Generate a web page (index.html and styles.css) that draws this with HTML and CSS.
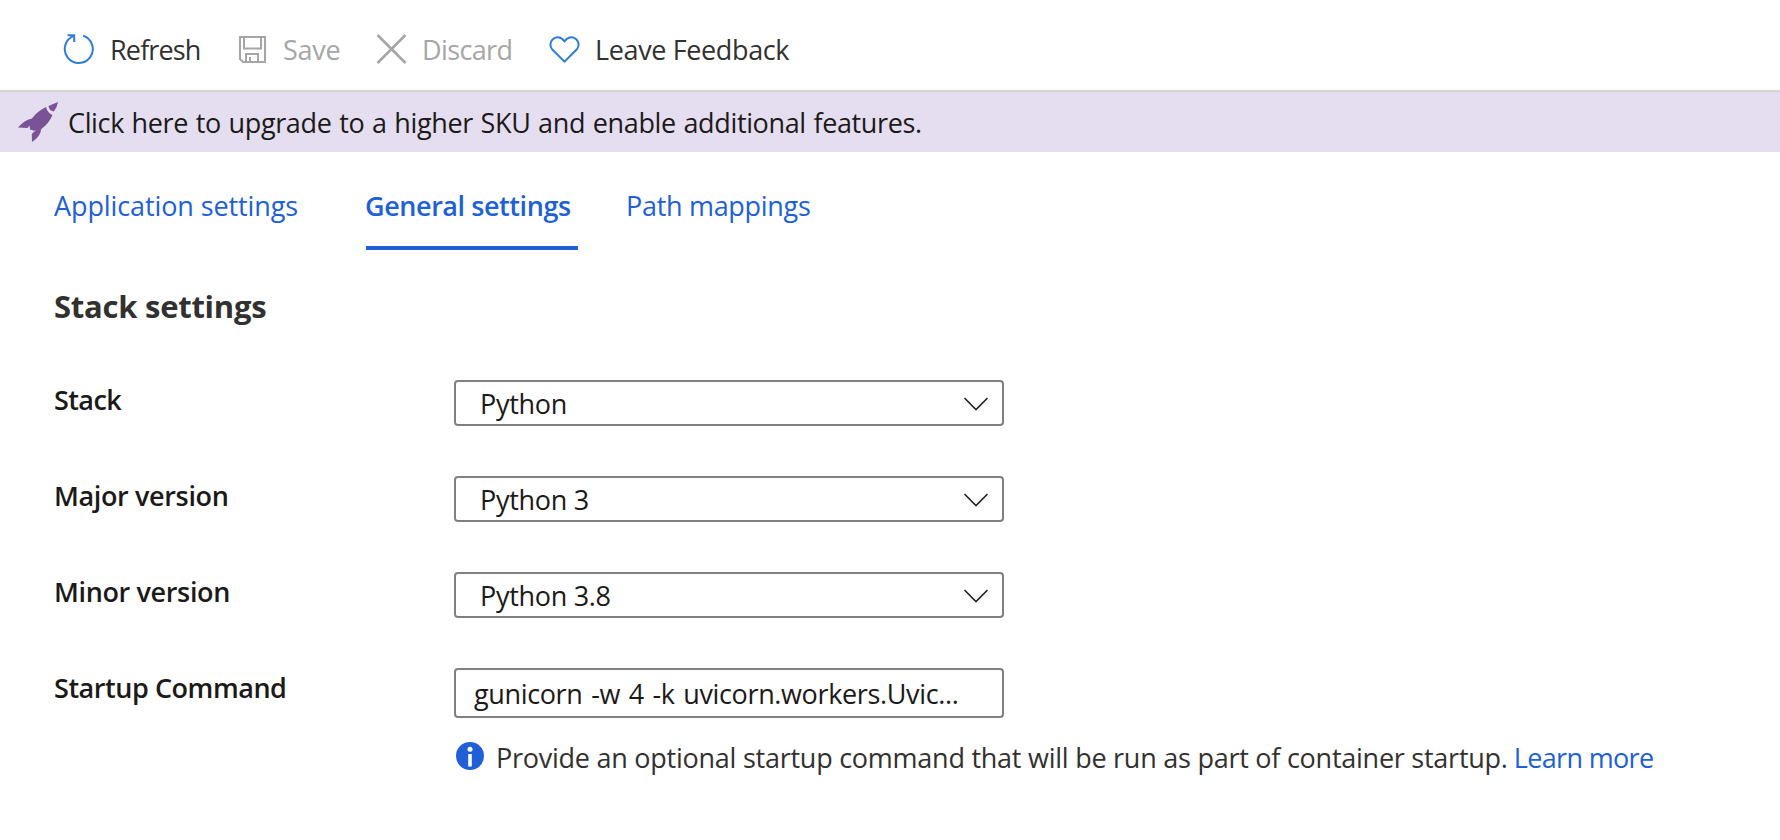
FILE: index.html
```html
<!DOCTYPE html>
<html lang="en">
<head>
<meta charset="utf-8">
<title>General settings</title>
<link rel="stylesheet" href="styles.css">
</head>
<body>
<header class="toolbar">
  <button class="command refresh">
    <svg class="icon" width="32" height="32" viewBox="0 0 32 32" fill="none" stroke="#2f7ddb" stroke-width="2"><path d="M20.2 2.7A14 14 0 1 1 10.8 2.9M4.500 2.200H11.200V9"/></svg>
    <span class="text">Refresh</span>
  </button>
  <button class="command save disabled">
    <svg class="icon" width="32" height="32" viewBox="0 0 32 32" fill="none" stroke="#a6a6a6" stroke-width="2"><path d="M2 4H27V29H5L2 26ZM6 4V15.500H23V4M8 29V21H20V29M12 24V29"/></svg>
    <span class="text">Save</span>
  </button>
  <button class="command discard disabled">
    <svg class="icon" width="32" height="32" viewBox="0 0 32 32" fill="none" stroke="#a6a6a6" stroke-width="2.600"><path d="M1.500 2L29.500 30M29.500 2L1.500 30"/></svg>
    <span class="text">Discard</span>
  </button>
  <button class="command feedback">
    <svg class="icon" width="32" height="32" viewBox="0 0 32 32" fill="none" stroke="#2f7ddb" stroke-width="2"><path d="M15.500 8.300L13.300 6.100A7.200 7.200 0 0 0 3.100 16.200L15.500 28.600L27.900 16.200A7.200 7.200 0 0 0 17.700 6.100Z"/></svg>
    <span class="text">Leave Feedback</span>
  </button>
</header>

<a class="banner">
  <svg class="rocket" width="42" height="42" viewBox="0 0 42 42" fill="#7a5296"><path d="M41 1L31.500 5Q32 9.500 36.800 10.500Q40.300 6 41 1Z"/><path d="M29 6Q20.500 10 15 17.500Q8 18.500 1 26.600L10.500 27L12.500 24.500L13 28.500L17 29.700L19 29L14.800 33L15 41Q23.200 36 24.300 28Q32 22.500 35.500 14Q30.500 12 29 6Z"/></svg>
  <span class="text">Click here to upgrade to a higher SKU and enable additional features.</span>
</a>

<nav class="tabs">
  <a class="tab application">Application settings</a>
  <a class="tab general active">General settings</a>
  <a class="tab paths">Path mappings</a>
</nav>

<main class="settings">
  <h2 class="heading">Stack settings</h2>
  <div class="row">
    <label class="label stack">Stack</label>
    <div class="field select"><span class="value">Python</span>
      <svg class="chevron" width="26" height="16" viewBox="0 0 26 16" fill="none" stroke="#222" stroke-width="1.600"><path d="M1.500 2L13 13.500L24.500 2"/></svg></div>
  </div>
  <div class="row">
    <label class="label major">Major version</label>
    <div class="field select"><span class="value">Python 3</span>
      <svg class="chevron" width="26" height="16" viewBox="0 0 26 16" fill="none" stroke="#222" stroke-width="1.600"><path d="M1.500 2L13 13.500L24.500 2"/></svg></div>
  </div>
  <div class="row">
    <label class="label minor">Minor version</label>
    <div class="field select"><span class="value">Python 3.8</span>
      <svg class="chevron" width="26" height="16" viewBox="0 0 26 16" fill="none" stroke="#222" stroke-width="1.600"><path d="M1.500 2L13 13.500L24.500 2"/></svg></div>
  </div>
  <div class="row">
    <label class="label startup">Startup Command</label>
    <div class="field input"><span class="command-line">gunicorn -w 4 -k uvicorn.workers.Uvic...</span></div>
  </div>
  <div class="help">
    <svg class="info" width="28" height="28" viewBox="0 0 28 28"><circle cx="14" cy="14" r="14" fill="#215fd6"/><circle cx="14" cy="7.300" r="2.500" fill="#fff"/><path d="M12.200 12H15.800V24.500H12.200Z" fill="#fff"/></svg>
    <span class="help-text">Provide an optional startup command that will be run as part of container startup.</span>
    <a class="learn">Learn more</a>
  </div>
</main>
</body>
</html>
```
FILE: styles.css
```css
* { box-sizing: border-box; }

body {
  margin: 0;
  background: #fff;
  color: #1b1a19;
  font: 27px/40px "Open Sans", "Noto Sans", sans-serif;
  letter-spacing: -0.25px;
  white-space: nowrap;
}

svg { display: block; flex: none; }

.toolbar {
  display: flex;
  height: 92px;
  padding: 9px 0 0 63px;
  border-bottom: 2px solid #d4d4d4;
}

.command {
  display: flex;
  align-items: center;
  gap: 15px;
  height: 81px;
  padding: 0;
  border: 0;
  background: none;
  color: #323130;
  font: inherit;
}

.command .icon { margin-top: -1px; }
.command .text { padding-top: 1px; }
.refresh { width: 175px; letter-spacing: -0.85px; }
.save { width: 138px; gap: 13px; letter-spacing: -0.3px; }
.discard { width: 173px; gap: 14px; letter-spacing: -0.63px; }
.feedback { gap: 14px; letter-spacing: -0.37px; }
.disabled { color: #a6a6a6; }

.banner {
  display: flex;
  align-items: center;
  gap: 9px;
  height: 60px;
  padding-left: 17px;
  background: #e5def0;
  letter-spacing: -0.36px;
  word-spacing: 1px;
}

.banner .text { padding-top: 1px; }

.tabs {
  display: flex;
  height: 98px;
  padding: 34px 0 0 54px;
  color: #215fd6;
}

.tab { height: 64px; }
.application { width: 312px; letter-spacing: -0.1px; }
.general { width: 212px; margin-right: 48px; letter-spacing: -0.43px; text-indent: -1px; }
.paths { letter-spacing: -0.3px; }
.active { font-weight: 600; border-bottom: 4px solid #215fd6; }

.settings { padding: 36px 0 0 54px; }

.heading {
  margin: 0 0 54px;
  color: #323130;
  font-size: 31px;
  font-weight: 700;
  line-height: 40px;
  letter-spacing: -0.25px;
}

.row { display: flex; height: 96px; }
.label { width: 400px; font-weight: 600; line-height: 40px; letter-spacing: -0.36px; }
.startup { letter-spacing: -0.45px; }
.stack { letter-spacing: -0.6px; }

.field {
  display: flex;
  align-items: center;
  width: 550px;
  height: 46px;
  padding-top: 1px;
  border: 2px solid #808080;
  border-radius: 4px;
}

.select { justify-content: space-between; padding-right: 13px; padding-left: 24px; letter-spacing: -0.3px; }
.input { height: 50px; padding-left: 18px; letter-spacing: -0.36px; word-spacing: 2px; }

.help {
  display: flex;
  align-items: center;
  height: 40px;
  margin-top: -26px;
  padding-left: 402px;
  color: #323130;
}

.info { margin: -4px 12px 0 0; }
.learn { margin-left: 6px; color: #215fd6; letter-spacing: -0.65px; }
```
